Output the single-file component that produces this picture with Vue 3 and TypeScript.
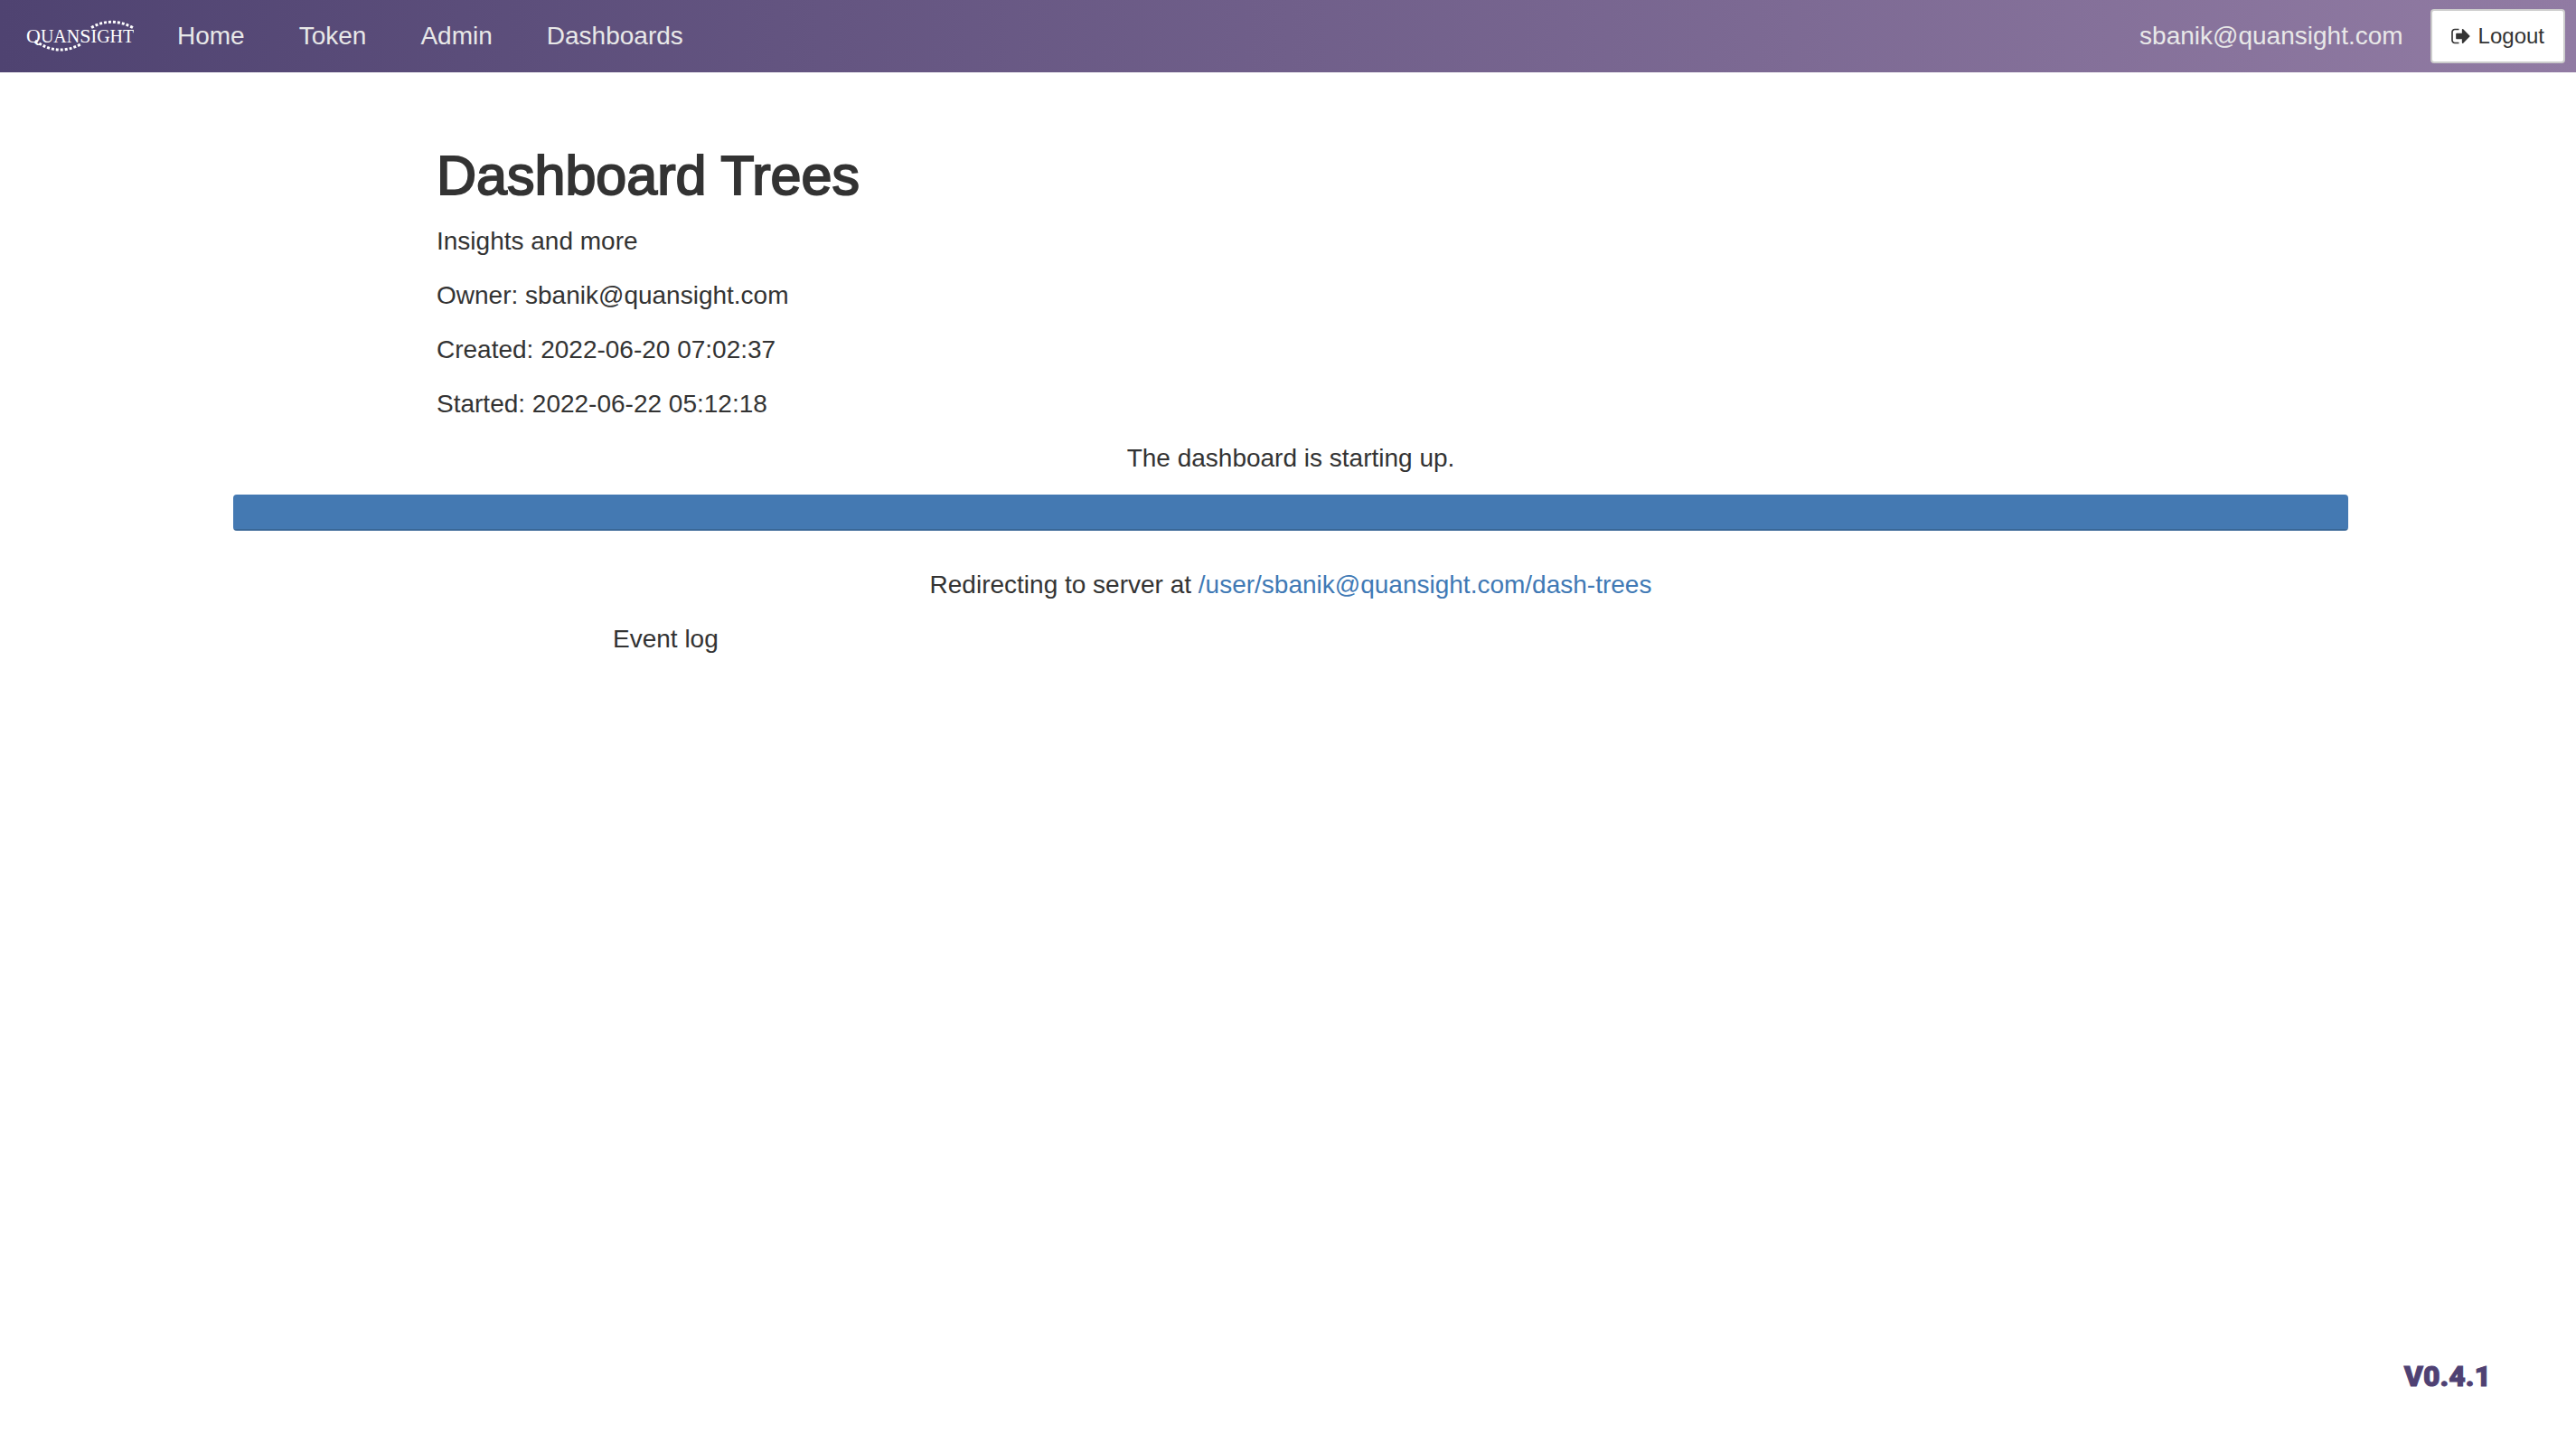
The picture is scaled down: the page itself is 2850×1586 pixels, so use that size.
<script setup lang="ts">
interface NavLink {
  label: string
  href: string
}

const navLinks: NavLink[] = [
  { label: 'Home', href: '#home' },
  { label: 'Token', href: '#token' },
  { label: 'Admin', href: '#admin' },
  { label: 'Dashboards', href: '#dashboards' },
]

const user = 'sbanik@quansight.com'
const serverPath = `/user/${user}/dash-trees`

const details: string[] = [
  'Insights and more',
  `Owner: ${user}`,
  'Created: 2022-06-20 07:02:37',
  'Started: 2022-06-22 05:12:18',
]

const progress = 100
</script>

<template>
  <div class="page">
    <header class="navbar">
      <a class="brand" href="#home" aria-label="QuanSight">
        <svg class="logo" viewBox="0 0 120 40" width="120" height="40">
          <text class="logo-text" x="1" y="27">
            <tspan class="cap">Q</tspan><tspan>UAN</tspan><tspan class="cap">S</tspan><tspan>IGHT</tspan>
          </text>
          <path class="dots" d="M73 10.5Q95 -2 119 10.500" />
          <path class="dots" d="M11 25Q35 43 61 29" />
        </svg>
      </a>
      <nav class="links">
        <a v-for="link in navLinks" :key="link.label" :href="link.href">{{ link.label }}</a>
      </nav>
      <span class="user">{{ user }}</span>
      <button class="logout" type="button">
        <svg viewBox="64 128 1664 1536" width="22" height="20" aria-hidden="true">
          <path
            fill="currentColor"
            d="M704 1440q0 4 1 20t.5 26.500-3 23.500-10 19.500-20.500 6.500h-320q-119 0-203.500-84.500t-84.500-203.500v-704q0-119 84.500-203.500t203.500-84.500h320q13 0 22.500 9.500t9.500 22.500q0 4 1 20t.5 26.500-3 23.500-10 19.500-20.500 6.500h-320q-66 0-113 47t-47 113v704q0 66 47 113t113 47h312l11.500 1 11.500 3 8 5.500 7 9 2 13.500zm928-544q0 26-19 45l-544 544q-19 19-45 19t-45-19-19-45v-288h-448q-26 0-45-19t-19-45v-384q0-26 19-45t45-19h448v-288q0-26 19-45t45-19 45 19l544 544q19 19 19 45z"
          />
        </svg>
        Logout
      </button>
    </header>

    <main class="container">
      <section class="details">
        <h1>Dashboard Trees</h1>
        <p v-for="line in details" :key="line">{{ line }}</p>
      </section>
      <p class="centered">The dashboard is starting up.</p>
      <div class="progress" role="progressbar" :aria-valuenow="progress" aria-valuemin="0" aria-valuemax="100">
        <div class="progress-bar" :style="{ width: progress + '%' }"></div>
      </div>
      <p class="centered">Redirecting to server at <a :href="serverPath">{{ serverPath }}</a></p>
      <p class="event-log">Event log</p>
    </main>

    <footer class="version">V0.4.1</footer>
  </div>
</template>

<style>
body {
  margin: 0;
  background: #fff;
}
</style>

<style scoped>
.page {
  box-sizing: border-box;
  display: flex;
  flex-direction: column;
  min-height: 100vh;
  font-family: "Liberation Sans", Arial, sans-serif;
  font-size: 28px;
  line-height: 40px;
  color: #333;
}

.navbar {
  display: flex;
  align-items: center;
  height: 80px;
  padding: 0 12px 0 28px;
  background: linear-gradient(to right, #4f4371, #917ba3);
  color: #e8e8e8;
}

.brand {
  display: flex;
  margin-right: 18px;
}

.logo-text {
  font-family: "Liberation Serif", "Times New Roman", serif;
  font-size: 20px;
  fill: #fff;
}

.logo-text .cap {
  font-size: 22px;
}

.dots {
  fill: none;
  stroke: #fff;
  stroke-width: 3;
  stroke-dasharray: 3 2;
}

.links {
  display: flex;
}

.links a {
  padding: 20px 30px;
  color: inherit;
  text-decoration: none;
}

.user {
  margin-left: auto;
  margin-right: 30px;
}

.logout {
  display: flex;
  align-items: center;
  gap: 8px;
  padding: 10px 21px;
  border: 2px solid #ccc;
  border-radius: 4px;
  background: #fff;
  color: #333;
  font-family: inherit;
  font-size: 24px;
  line-height: 36px;
}

.container {
  box-sizing: border-box;
  width: 100%;
  max-width: 2346px;
  margin: 0 auto;
  padding: 81px 0 0 6px;
}

.details {
  padding-left: 225px;
}

h1 {
  margin: 0 0 20px;
  font-size: 61px;
  font-weight: 400;
  line-height: 66px;
  -webkit-text-stroke: 2px currentColor;
}

p {
  margin: 0 0 20px;
}

.centered {
  text-align: center;
}

.centered a {
  color: #4079b5;
  text-decoration: none;
}

.progress {
  height: 40px;
  margin-bottom: 40px;
  overflow: hidden;
  border-radius: 4px;
  background: #f5f5f5;
}

.progress-bar {
  height: 100%;
  background: #4479b2;
  box-shadow: inset 0 -2px 0 rgba(0, 0, 0, 0.15);
}

.event-log {
  padding-left: 420px;
}

.version {
  margin-top: auto;
  padding: 0 94px 44px;
  text-align: right;
  font-family: Roboto, sans-serif;
  font-size: 32px;
  font-weight: 900;
  color: #4f4173;
  -webkit-text-stroke: 1px currentColor;
}
</style>
